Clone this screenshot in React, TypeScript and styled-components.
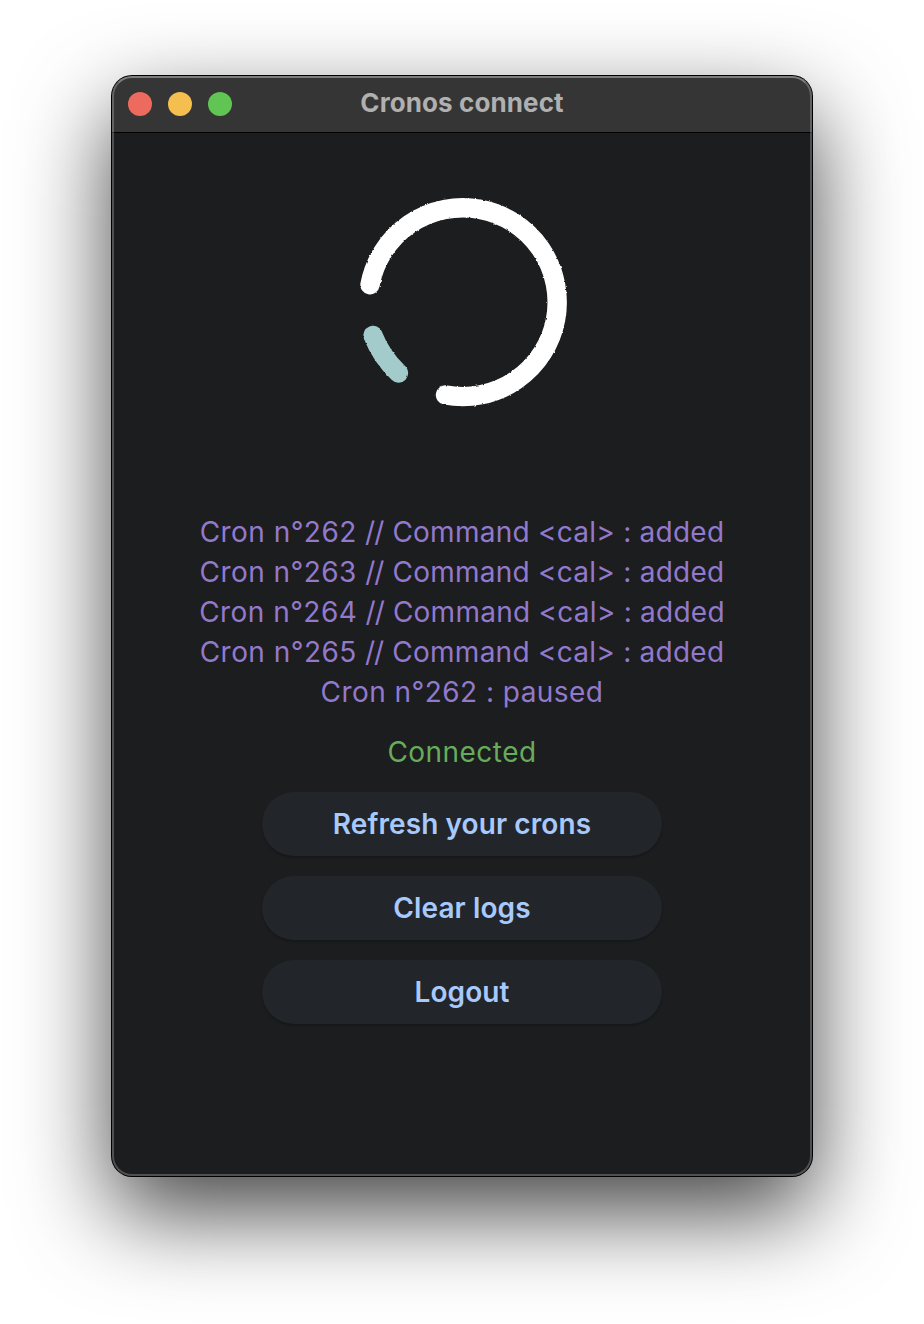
import React from "react";
import styled, { createGlobalStyle } from "styled-components";

const GlobalStyle = createGlobalStyle`
  * { box-sizing: border-box; }
  body {
    margin: 0;
    background: #fff;
    font-family: Inter, "Liberation Sans", sans-serif;
  }
`;

const Desktop = styled.div`
  display: flex;
  justify-content: center;
  height: 1324px;
  padding-top: 76px;
  overflow: hidden;
`;

const AppWindow = styled.section`
  position: relative;
  display: flex;
  flex-direction: column;
  width: 700px;
  height: 1100px;
  border-radius: 20px;
  background: #1c1d1e;
  box-shadow: 0 0 0 1px #000, 0 36px 92px rgba(0, 0, 0, 0.74);

  &::after {
    content: "";
    position: absolute;
    inset: 0;
    border: 2px solid rgba(255, 255, 255, 0.23);
    border-top-color: rgba(255, 255, 255, 0.36);
    border-radius: inherit;
    pointer-events: none;
  }
`;

const TitleBar = styled.header`
  display: grid;
  grid-template-columns: 120px 1fr 120px;
  align-items: center;
  height: 57px;
  border-bottom: 1px solid #000;
  border-radius: 20px 20px 0 0;
  background: #353535;
`;

const Lights = styled.div`
  display: flex;
  gap: 16px;
  padding-left: 16px;
`;

const Light = styled.span<{ $color: string }>`
  width: 24px;
  height: 24px;
  border-radius: 50%;
  background: ${(p) => p.$color};
`;

const Title = styled.h1`
  margin: 0;
  padding-bottom: 2px;
  color: #b0b0b0;
  font-size: 26px;
  font-weight: 700;
  line-height: 32px;
  letter-spacing: 0.1px;
  text-align: center;
`;

const Content = styled.main`
  display: flex;
  flex-direction: column;
  align-items: center;
  padding-top: 47px;
`;

const Logo = styled.svg`
  display: block;
  width: 250px;
  height: 250px;
  margin-left: 6px;
`;

const Logs = styled.ul`
  margin: 82px 0 0;
  padding: 0;
  list-style: none;
  color: #9379cc;
  font-size: 28px;
  line-height: 40px;
  letter-spacing: 0.45px;
  text-align: center;
  white-space: nowrap;
`;

const Separator = styled.span`
  margin-right: 1px;
  letter-spacing: -1px;
`;

const Detail = styled.span`
  letter-spacing: 0.25px;
`;

const Status = styled.p`
  margin: 20px 0;
  color: #66ac5b;
  font-size: 28px;
  line-height: 40px;
  letter-spacing: 0.45px;
`;

const Actions = styled.div`
  display: flex;
  flex-direction: column;
  gap: 20px;
`;

const ActionButton = styled.button`
  width: 400px;
  height: 64px;
  padding: 0;
  border: 0;
  border-radius: 32px;
  background: #222529;
  box-shadow: 0 2px 2px rgba(0, 0, 0, 0.2);
  color: #a8c9fc;
  font: 600 28px/40px Inter, "Liberation Sans", sans-serif;
  letter-spacing: 0.1px;
`;

const logs = [
  { cron: 262, command: "cal", state: "added" },
  { cron: 263, command: "cal", state: "added" },
  { cron: 264, command: "cal", state: "added" },
  { cron: 265, command: "cal", state: "added" },
  { cron: 262, state: "paused" },
];

const actions = ["Refresh your crons", "Clear logs", "Logout"];

function CronosLogo() {
  return (
    <Logo viewBox="0 0 250 250" aria-label="Cronos">
      <defs>
        <filter id="rough" x="-5%" y="-5%" width="110%" height="110%">
          <feTurbulence type="fractalNoise" baseFrequency="0.35" numOctaves="2" seed="4" />
          <feDisplacementMap in="SourceGraphic" scale="2.2" xChannelSelector="R" yChannelSelector="G" />
        </filter>
      </defs>
      <g fill="none" strokeWidth="19.4" strokeLinecap="round" filter="url(#rough)">
        <path d="M30 104.800A94.4 94.4 0 1 1 105.500 215" stroke="#fff" />
        <path d="M33 155.500Q41.500 177 58.500 193" stroke="#a3cbcc" />
      </g>
    </Logo>
  );
}

export default function App() {
  return (
    <>
      <GlobalStyle />
      <Desktop>
        <AppWindow>
          <TitleBar>
            <Lights>
              <Light $color="#ed6a5e" />
              <Light $color="#f5bf4f" />
              <Light $color="#61c554" />
            </Lights>
            <Title>Cronos connect</Title>
          </TitleBar>
          <Content>
            <CronosLogo />
            <Logs>
              {logs.map(({ cron, command, state }) => (
                <li key={`${cron}-${state}`}>
                  {`Cron n°${cron} `}
                  {command ? (
                    <>
                      <Separator>{"//"}</Separator>
                      <Detail>{` Command <${command}> : ${state}`}</Detail>
                    </>
                  ) : (
                    `: ${state}`
                  )}
                </li>
              ))}
            </Logs>
            <Status>Connected</Status>
            <Actions>
              {actions.map((label) => (
                <ActionButton key={label}>{label}</ActionButton>
              ))}
            </Actions>
          </Content>
        </AppWindow>
      </Desktop>
    </>
  );
}
